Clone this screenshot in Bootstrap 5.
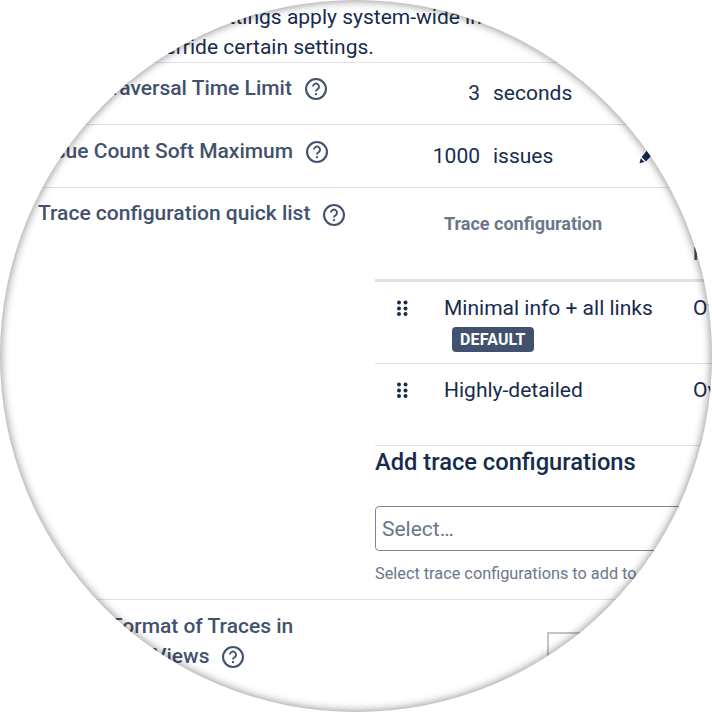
<!doctype html>
<html lang="en"><head><meta charset="utf-8">
<title>Settings</title>
<link href="https://cdn.jsdelivr.net/npm/bootstrap@5.3.0/dist/css/bootstrap.min.css" rel="stylesheet">
<style>
html,body{margin:0;background:#fff}
.stage{width:712px;height:712px;overflow:hidden;position:relative;font-family:Roboto,sans-serif;color:#172b4d;font-size:21px;line-height:30px}
.inner{width:900px;padding-left:38px;height:712px}
.intro{padding-top:2px;height:62px;width:560px;margin-left:-3px}
.setrow{border-top:1px solid #dfe1e6;display:flex}
.lblcol{width:337px;flex:none;color:#42526e;font-weight:500;display:block}
.h-a{height:62px}.h-b{height:63px}.h-c{height:412px}
.lbl-a{padding-top:10px;padding-left:7px}.lbl-b{padding-top:11px}.lbl-c{padding-top:10px}
.valnum{width:105px;text-align:right;flex:none}
.valunit{margin-left:13px}
.val-a{padding-top:15px;display:flex}
.val-b{padding-top:16px;display:flex}
.hint{width:22px;height:22px;margin-left:13px;vertical-align:-5px}
.lbl-c .hint{vertical-align:-6px}
.pencil{position:absolute;left:638px;top:149px;width:15px;height:15px}
.tracewrap{width:500px;flex:none}
.thead{height:94px;display:flex;border-bottom:3px solid #dfe1e6;font-size:18px;font-weight:700;color:#6b778c;line-height:24px}
.c1{width:69px;flex:none}.c2{width:249px;flex:none}
.thead .c2{padding-top:24px}
.thead .c3{padding-top:54px;color:#42526e}
.trow{display:flex;border-bottom:1px solid #dfe1e6}
.r1{height:82px;padding-top:11px}.r2{height:82px;padding-top:11px}
.grip{display:block;margin:7px 0 0 21px}
.tag{background:#42526e;color:#fff;font-weight:700;font-size:15.9px;line-height:21px;height:25px;padding:2px 8px;border-radius:4px;display:inline-block;margin:4px 0 0 8px;letter-spacing:.2px;vertical-align:top}
.addh{font-size:23.7px;font-weight:500;line-height:30px;margin:1px 0 0;color:#172b4d}
.selbox{height:45px;border:1px solid #7a869a;border-radius:4px;margin-top:29px;color:#6b778c;padding:7px 6px;width:460px}
.helptxt{font-size:16.3px;color:#6b778c;line-height:24px;margin-top:11px;white-space:nowrap}
.previewbox{width:170px;height:80px;border:2px solid #c4c4c4;margin:32px 0 0 172px}
.lens{position:absolute;left:0;top:0;width:712px;height:712px;border-radius:50%;box-shadow:0 0 0 400px #fff,inset 0 0 9px 1px rgba(0,0,0,.42);pointer-events:none}
</style></head>
<body>
<div class="stage">
<div class="inner">
<div class="intro">Please note these settings apply system-wide in all<br>Teams can override certain settings.</div>
<div class="setrow h-a">
 <div class="lblcol lbl-a">Issue Traversal Time Limit<svg class="hint" viewBox="0 0 21 21"><circle cx="10.5" cy="10.5" r="9.5" fill="none" stroke="#42526e" stroke-width="2"/><path d="M7.6 8.2a2.9 2.9 0 1 1 4.4 2.5c-1 .6-1.5 1.1-1.5 2.1" fill="none" stroke="#42526e" stroke-width="1.800"/><circle cx="10.5" cy="15.4" r="1.1" fill="#42526e"/></svg></div>
 <div class="val-a"><div class="valnum">3</div><div class="valunit">seconds</div></div>
</div>
<div class="setrow h-b">
 <div class="lblcol lbl-b">Issue Count Soft Maximum<svg class="hint" viewBox="0 0 21 21"><circle cx="10.5" cy="10.5" r="9.5" fill="none" stroke="#42526e" stroke-width="2"/><path d="M7.6 8.2a2.9 2.9 0 1 1 4.4 2.5c-1 .6-1.5 1.1-1.5 2.1" fill="none" stroke="#42526e" stroke-width="1.800"/><circle cx="10.5" cy="15.4" r="1.1" fill="#42526e"/></svg></div>
 <div class="val-b"><div class="valnum">1000</div><div class="valunit">issues</div></div>
</div>
<div class="setrow h-c">
 <div class="lblcol lbl-c">Trace configuration quick list<svg class="hint" viewBox="0 0 21 21"><circle cx="10.5" cy="10.5" r="9.5" fill="none" stroke="#42526e" stroke-width="2"/><path d="M7.6 8.2a2.9 2.9 0 1 1 4.4 2.5c-1 .6-1.5 1.1-1.5 2.1" fill="none" stroke="#42526e" stroke-width="1.800"/><circle cx="10.5" cy="15.4" r="1.1" fill="#42526e"/></svg></div>
 <div class="tracewrap">
  <div class="thead"><div class="c1"></div><div class="c2">Trace configuration</div><div class="c3">Issue</div></div>
  <div class="trow r1"><div class="c1"><svg class="grip" width="12" height="16" viewBox="0 0 12 16" fill="#172b4d"><circle cx="3" cy="2.5" r="2"/><circle cx="9.500" cy="2.500" r="2"/><circle cx="3" cy="8.500" r="2"/><circle cx="9.500" cy="8.500" r="2"/><circle cx="3" cy="14" r="2"/><circle cx="9.500" cy="14" r="2"/></svg></div><div class="c2">Minimal info + all links<br><span class="tag">DEFAULT</span></div><div class="c3">Overview</div></div>
  <div class="trow r2"><div class="c1"><svg class="grip" width="12" height="16" viewBox="0 0 12 16" fill="#172b4d"><circle cx="3" cy="2.500" r="2"/><circle cx="9.500" cy="2.500" r="2"/><circle cx="3" cy="8.500" r="2"/><circle cx="9.500" cy="8.500" r="2"/><circle cx="3" cy="14" r="2"/><circle cx="9.500" cy="14" r="2"/></svg></div><div class="c2">Highly-detailed</div><div class="c3">Overview</div></div>
  <h3 class="addh">Add trace configurations</h3>
  <div class="selbox">Select…</div>
  <div class="helptxt">Select trace configurations to add to the list</div>
 </div>
</div>
<div class="setrow">
 <div class="lblcol lbl-b">Default Format of Traces in<br>Issue Detail Views<svg class="hint" viewBox="0 0 21 21"><circle cx="10.5" cy="10.5" r="9.5" fill="none" stroke="#42526e" stroke-width="2"/><path d="M7.6 8.2a2.9 2.9 0 1 1 4.4 2.5c-1 .6-1.5 1.1-1.5 2.1" fill="none" stroke="#42526e" stroke-width="1.800"/><circle cx="10.5" cy="15.4" r="1.1" fill="#42526e"/></svg></div>
 <div><div class="previewbox"></div></div>
</div>
</div>
<svg class="pencil" viewBox="0 0 15 15"><path d="M9 1.500l5 4.500-6 6.500-4.500-4.500z" fill="#172b4d"/><path d="M2.800 9.200l3.700 3.800-5 1.200z" fill="#172b4d"/></svg>
<div class="lens"></div>
</div>
<script src="https://cdn.jsdelivr.net/npm/bootstrap@5.3.0/dist/js/bootstrap.bundle.min.js"></script>
</body></html>
